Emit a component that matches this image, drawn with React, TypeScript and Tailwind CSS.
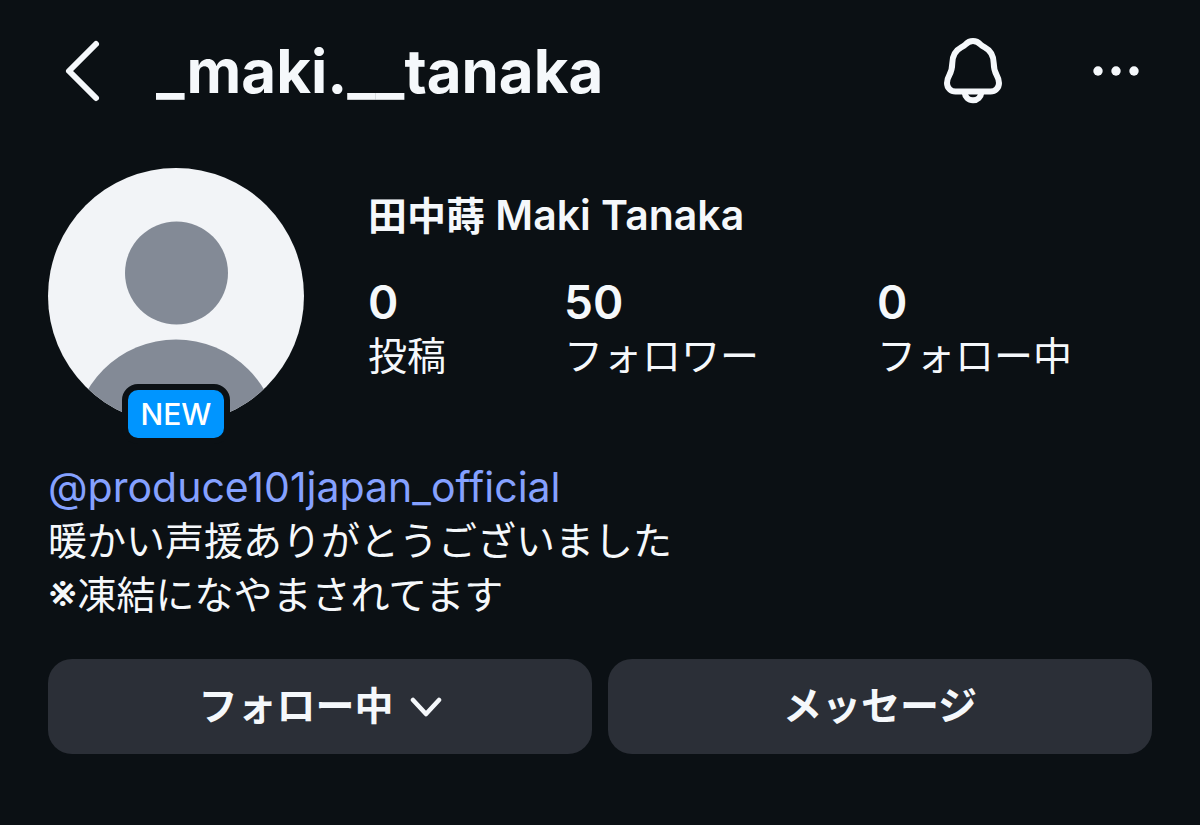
const stats = [
  { value: "0", label: "投稿" },
  { value: "50", label: "フォロワー" },
  { value: "0", label: "フォロー中" },
]

function BackIcon() {
  return (
    <svg viewBox="0 0 40 64" className="h-16 w-10" fill="none" stroke="currentColor" strokeWidth="6" strokeLinecap="round" strokeLinejoin="round" aria-hidden="true">
      <path d="M32 5 5 32l27 27" />
    </svg>
  )
}

function BellIcon() {
  return (
    <svg viewBox="0 0 60 68" className="h-[68px] w-[60px]" fill="none" stroke="currentColor" strokeWidth="6" strokeLinejoin="round" aria-hidden="true">
      <path d="M30 4c-3.300 0-5.500 1.300-7.500 3.500-1.200 1.300-2.500 2-4.300 2.900C12.500 13.400 9.500 19 9.300 26c-.1 4.800-.5 7.800-2.900 12C5 40.500 4 43 4 46c0 5 3.800 8.500 8.500 8.500h35c4.700 0 8.500-3.500 8.500-8.500 0-3-1-5.500-2.400-8-2.400-4.200-2.800-7.200-2.900-12-.2-7-3.200-12.600-8.900-15.600-1.800-.9-3.100-1.600-4.300-2.900C35.500 5.300 33.300 4 30 4Z" />
      <path d="M21.500 55c.5 5 4 8.200 8.500 8.200s8-3.200 8.500-8.200" />
    </svg>
  )
}

function MoreIcon() {
  return (
    <svg viewBox="0 0 48 12" className="h-3 w-12" fill="currentColor" aria-hidden="true">
      <circle cx="6" cy="6" r="4.700" />
      <circle cx="24" cy="6" r="4.700" />
      <circle cx="42" cy="6" r="4.700" />
    </svg>
  )
}

function Avatar() {
  return (
    <div className="relative flex size-64 shrink-0 justify-center">
      <svg viewBox="0 0 256 256" className="size-64" role="img" aria-label="プロフィール写真">
        <clipPath id="avatar-clip">
          <circle cx="128" cy="128" r="128" />
        </clipPath>
        <g clipPath="url(#avatar-clip)">
          <rect width="256" height="256" fill="#f2f4f7" />
          <circle cx="128.500" cy="105" r="51.500" fill="#838a96" />
          <circle cx="128" cy="274" r="102.500" fill="#838a96" />
        </g>
      </svg>
      <span className="absolute -bottom-5 flex h-[60px] w-[108px] items-center justify-center rounded-2xl border-6 border-[#0b1014] bg-[#0095ff] text-[30px] font-medium text-white">
        NEW
      </span>
    </div>
  )
}

export default function App() {
  return (
    <main className="min-h-screen bg-[#0b1014] px-12 pb-[71px] font-['Inter','Noto_Sans_CJK_JP',sans-serif] text-[#f5f8fb]" lang="ja">
      <header className="flex h-[142px] items-center">
        <button type="button" aria-label="戻る" className="ml-4 shrink-0">
          <BackIcon />
        </button>
        <h1 className="ml-[52px] flex-1 text-[60px] leading-[72px] font-bold">_maki.__tanaka</h1>
        <button type="button" aria-label="お知らせ">
          <BellIcon />
        </button>
        <button type="button" aria-label="その他" className="mr-3 ml-[89px]">
          <MoreIcon />
        </button>
      </header>

      <section className="mt-[26px] flex gap-16">
        <Avatar />
        <div className="flex-1 pt-5">
          <h2 className="text-[41px] leading-[54px] font-semibold">
            <span className="text-[39px]">田中蒔</span> Maki Tanaka
          </h2>
          <dl className="mt-8 flex justify-between pr-20">
            {stats.map((stat) => (
              <div key={stat.label} className="flex flex-col-reverse">
                <dt className="text-[39px] leading-[54px]">{stat.label}</dt>
                <dd className="text-[46px] leading-[54px] font-semibold">{stat.value}</dd>
              </div>
            ))}
          </dl>
        </div>
      </section>

      <section className="mt-9 text-[39px] leading-[54px]">
        <a href="#produce101japan_official" className="block text-[41px] text-[#85a1ff]">
          @produce101japan_official
        </a>
        <p>暖かい声援ありがとうございました</p>
        <p>
          <span className="text-[46px] leading-none">※</span>凍結になやまされてます
        </p>
      </section>

      <div className="mt-[37px] grid grid-cols-2 gap-4 text-[39px] font-semibold">
        <button type="button" className="flex h-[95px] items-center justify-center gap-4 rounded-3xl bg-[#2b2f37]">
          フォロー中
          <svg viewBox="0 0 32 24" className="h-6 w-8" fill="none" stroke="currentColor" strokeWidth="4.500" strokeLinecap="round" strokeLinejoin="round" aria-hidden="true">
            <path d="m3 5 13 14L29 5" />
          </svg>
        </button>
        <button type="button" className="h-[95px] rounded-3xl bg-[#2b2f37]">
          メッセージ
        </button>
      </div>
    </main>
  )
}
